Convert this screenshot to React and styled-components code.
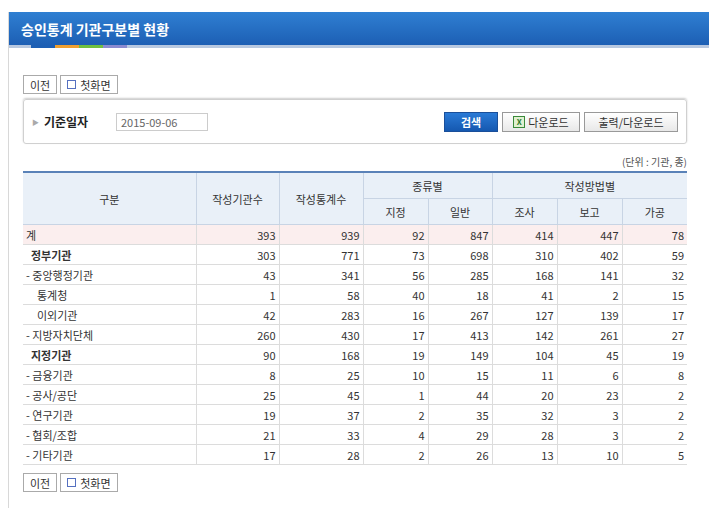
import React from "react";
import styled, { createGlobalStyle } from "styled-components";

const G = createGlobalStyle`
  body{margin:0;background:#fff;font-family:"Noto Sans CJK KR","Noto Sans",sans-serif;font-size:11px;color:#333;}
`;
const Page = styled.div`width:709px;height:508px;padding-top:12px;box-sizing:border-box;`;
const Frame = styled.div`margin-left:8px;border-left:1px solid #d8d8d8;height:496px;`;
const Title = styled.div`
  height:33px;background:linear-gradient(#2f7fd2,#1d5fb4);color:#fff;font-weight:bold;font-size:14px;
  display:flex;align-items:center;padding-left:12px;
`;
const Strips = styled.div`display:flex;padding-left:22px;height:3px;background:#b8c8e0;`;
const Strip = styled.div`width:24px;height:3px;background:${p=>p.c};`;
const Body = styled.div`padding:27px 0 0 14px;width:664px;`;
const BtnRow = styled.div`display:flex;gap:3px;`;
const Btn = styled.div`
  height:17px;border:1px solid #aaa;background:#fff;display:flex;align-items:center;gap:4px;padding:0 6px;font-size:11px;color:#333;
`;
const Sq = styled.span`width:7px;height:7px;border:1px solid #5570c0;`;
const Search = styled.div`
  margin-top:5px;height:43px;border:1px solid #d0d0d0;border-radius:3px;box-shadow:0 -1px 2px #ccc;display:flex;align-items:center;padding:0 8px;
`;
const Label = styled.div`font-weight:bold;font-size:12px;color:#222;width:84px;display:flex;gap:5px;align-items:center;`;
const Arrow = styled.span`color:#aaa;font-size:7px;`;
const Input = styled.div`width:86px;height:16px;border:1px solid #ccc;color:#666;font-size:11px;padding-left:4px;display:flex;align-items:center;`;
const Spacer = styled.div`flex:1;`;
const SBtn = styled.div`
  height:18px;display:flex;align-items:center;justify-content:center;width:${p=>p.w}px;margin-left:4px;font-size:11px;
  ${p=>p.blue?"background:linear-gradient(#2a7ad6,#1558b0);color:#fff;font-weight:bold;border:1px solid #1a4f9a;":"background:linear-gradient(#fff,#e8e8e8);border:1px solid #999;color:#333;"}
`;
const XL = styled.span`width:10px;height:10px;background:#e0f0d0;border:1px solid #3a8a3a;color:#2a7a2a;font-size:8px;font-weight:bold;display:inline-flex;align-items:center;justify-content:center;margin-right:3px;`;
const Unit = styled.div`text-align:right;margin-top:10px;font-size:10px;color:#555;height:17px;`;
const Table = styled.table`width:664px;border-collapse:collapse;border-top:2px solid #5a82b8;font-size:11px;table-layout:fixed;`;
const Th = styled.th`
  font-weight:normal;color:#333;background:#e9f0f8;height:25px;padding:0;border:1px solid #c8d4e4;border-top:none;
  &:first-child{border-left:none;} &:last-child{border-right:none;}
`;
const Td = styled.td`
  height:19px;padding:0 3px;border:1px solid #dcdcdc;text-align:${p=>p.l?"left":"right"};
  background:${p=>p.pink?"#fbeeee":"#fff"};font-weight:${p=>p.b?"bold":"normal"};color:#333;
  &:first-child{border-left:none;} &:last-child{border-right:none;}
`;
const Bottom = styled.div`margin-top:8px;`;

const rows=[
 ["계",393,939,92,847,414,447,78,0,1],
 ["정부기관",303,771,73,698,310,402,59,1],
 ["- 중앙행정기관",43,341,56,285,168,141,32],
 ["통계청",1,58,40,18,41,2,15,2],
 ["이외기관",42,283,16,267,127,139,17,2],
 ["- 지방자치단체",260,430,17,413,142,261,27],
 ["지정기관",90,168,19,149,104,45,19,1],
 ["- 금융기관",8,25,10,15,11,6,8],
 ["- 공사/공단",25,45,1,44,20,23,2],
 ["- 연구기관",19,37,2,35,32,3,2],
 ["- 협회/조합",21,33,4,29,28,3,2],
 ["- 기타기관",17,28,2,26,13,10,5],
];

const Buttons=()=>(<BtnRow><Btn>이전</Btn><Btn><Sq/>첫화면</Btn></BtnRow>);

export default function App(){
  return(<Page><G/><Frame>
    <Title>승인통계 기관구분별 현황</Title>
    <Strips><Strip c="#1d5fb4"/><Strip c="#f0a030"/><Strip c="#70c040"/><Strip c="#8a8ad0"/></Strips>
    <Body>
      <Buttons/>
      <Search>
        <Label><Arrow>▶</Arrow>기준일자</Label>
        <Input>2015-09-06</Input>
        <Spacer/>
        <SBtn blue w={52}>검색</SBtn>
        <SBtn w={76}><XL>X</XL>다운로드</SBtn>
        <SBtn w={92}>출력/다운로드</SBtn>
      </Search>
      <Unit>(단위 : 기관, 종)</Unit>
      <Table>
        <colgroup><col style={{width:173}}/><col style={{width:83}}/><col style={{width:84}}/><col style={{width:65}}/><col style={{width:64}}/><col style={{width:65}}/><col style={{width:65}}/><col style={{width:65}}/></colgroup>
        <thead>
          <tr><Th rowSpan={2}>구분</Th><Th rowSpan={2}>작성기관수</Th><Th rowSpan={2}>작성통계수</Th><Th colSpan={2}>종류별</Th><Th colSpan={3}>작성방법별</Th></tr>
          <tr><Th>지정</Th><Th>일반</Th><Th>조사</Th><Th>보고</Th><Th>가공</Th></tr>
        </thead>
        <tbody>
          {rows.map((r,i)=>(<tr key={i}>
            <Td l pink={r[9]?1:0} b={r[8]===1?1:0} style={{paddingLeft:r[8]===1?8:r[8]===2?14:3}}>{r[0]}</Td>
            {r.slice(1,8).map((v,j)=><Td key={j} pink={r[9]?1:0}>{v}</Td>)}
          </tr>))}
        </tbody>
      </Table>
      <Bottom><Buttons/></Bottom>
    </Body>
  </Frame></Page>);
}
